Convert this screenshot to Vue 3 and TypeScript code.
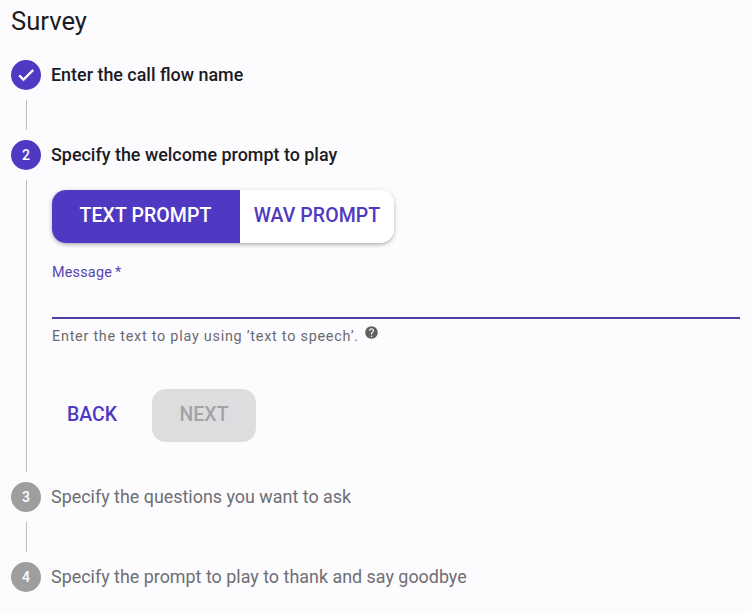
<script setup lang="ts">
interface Step { label: string; mark: string; state: 'done' | 'active' | 'todo' }
const steps: Step[] = [
  { label: 'Enter the call flow name', mark: '', state: 'done' },
  { label: 'Specify the welcome prompt to play', mark: '2', state: 'active' },
  { label: 'Specify the questions you want to ask', mark: '3', state: 'todo' },
  { label: 'Specify the prompt to play to thank and say goodbye', mark: '4', state: 'todo' },
]
</script>

<template>
  <main class="page">
    <h1 class="title">Survey</h1>
    <ol class="stepper">
      <li v-for="(s, i) in steps" :key="i" class="step">
        <div class="head">
          <span class="circle" :class="s.state">
            <svg v-if="s.state === 'done'" viewBox="0 0 24 24" width="20" height="20">
              <path d="M9 16.17 4.83 12l-1.42 1.41L9 19 21 7l-1.41-1.41z" fill="#fff" stroke="#fff" stroke-width="1.2" />
            </svg>
            <template v-else>{{ s.mark }}</template>
          </span>
          <span class="label" :class="s.state">{{ s.label }}</span>
        </div>
        <div v-if="i < steps.length - 1" class="body">
          <div v-if="s.state === 'active'" class="content">
            <div class="toggle">
              <button class="seg on">TEXT PROMPT</button>
              <button class="seg off">WAV PROMPT</button>
            </div>
            <div class="field">
              <label class="field-label">Message<span class="req">*</span></label>
              <input class="field-input" type="text" />
            </div>
            <p class="hint">
              Enter the text to play using ’text to speech’.
              <svg class="help" viewBox="0 0 24 24" width="15" height="15">
                <path fill="#616161" d="M12 2C6.48 2 2 6.48 2 12s4.48 10 10 10 10-4.48 10-10S17.52 2 12 2zm1 17h-2v-2h2v2zm2.07-7.75-.9.92C13.45 12.9 13 13.5 13 15h-2v-.5c0-1.1.45-2.1 1.17-2.83l1.24-1.26c.37-.36.59-.86.59-1.41 0-1.1-.9-2-2-2s-2 .9-2 2H8c0-2.21 1.79-4 4-4s4 1.79 4 4c0 .88-.36 1.68-.93 2.25z" />
              </svg>
            </p>
            <div class="actions">
              <button class="btn back">BACK</button>
              <button class="btn next" disabled>NEXT</button>
            </div>
          </div>
        </div>
      </li>
    </ol>
  </main>
</template>

<style>
html, body { margin: 0; background: #fcfcff; }
</style>

<style scoped>
.page {
  width: 751px;
  height: 614px;
  box-sizing: border-box;
  overflow: hidden;
  background: #fcfcff;
  font-family: Roboto, "Liberation Sans", sans-serif;
  color: #1c1b1f;
}
.title {
  margin: 0;
  padding: 7px 0 0 11px;
  height: 60px;
  box-sizing: border-box;
  font-size: 25.6px;
  line-height: 28px;
  font-weight: 400;
}
.stepper { list-style: none; margin: 0; padding: 0; }
.head {
  display: flex;
  align-items: center;
  height: 30px;
  padding-left: 11px;
  gap: 10px;
}
.circle {
  width: 30px;
  height: 30px;
  flex: none;
  border-radius: 50%;
  display: flex;
  align-items: center;
  justify-content: center;
  color: #fff;
  font-size: 14px;
  font-weight: 500;
  background: #4f39c2;
}
.circle.todo { background: #9e9e9e; }
.label { font-size: 17.92px; line-height: 30px; }
.label.done, .label.active { font-weight: 500; color: #1c1b1f; }
.label.todo { color: #6f6e72; }
.body {
  margin: 10px 0 10px 26px;
  border-left: 1px solid #bdbdbd;
  min-height: 30px;
}
.content { padding: 10px 10px 0 25px; height: 292px; box-sizing: border-box; }
.toggle {
  display: inline-flex;
  height: 53px;
  border-radius: 14px;
  overflow: hidden;
  background: #fff;
  box-shadow: 0 2px 4px -1px rgba(0,0,0,.3), 0 1px 6px rgba(0,0,0,.12);
  vertical-align: top;
}
.seg {
  border: 0;
  margin: 0;
  padding: 0 0 2px;
  height: 53px;
  font: 500 19.5px Roboto, sans-serif;
  letter-spacing: 0.08px;
  cursor: pointer;
}
.seg.on { width: 188px; padding-right: 1px; background: #4f39c2; color: #fff; }
.seg.off { width: 154px; background: #fff; color: #4f39c2; }
.field { margin-top: 20px; }
.field-label {
  display: block;
  font-size: 14.4px;
  line-height: 20px;
  color: #5445b0;
  letter-spacing: 0.2px;
}
.req { margin-left: 3px; }
.field-input {
  display: block;
  width: 688px;
  height: 36px;
  box-sizing: border-box;
  border: 0;
  border-bottom: 2px solid #503ea6;
  background: transparent;
  outline: none;
}
.hint {
  margin: 6px 0 0;
  font-size: 14.4px;
  line-height: 20px;
  letter-spacing: 0.75px;
  color: #6b6a6e;
}
.help { vertical-align: 1px; margin-left: 1px; }
.actions { display: flex; gap: 19px; margin-top: 42px; }
.btn {
  height: 53px;
  border: 0;
  border-radius: 14px;
  font: 500 19.5px Roboto, sans-serif;
  padding: 0 0 3px;
}
.btn.back { width: 80px; margin-right: 1px; background: transparent; color: #4f39c2; }
.btn.next { width: 104px; background: #dddde0; color: #a3a3a6; }
</style>
